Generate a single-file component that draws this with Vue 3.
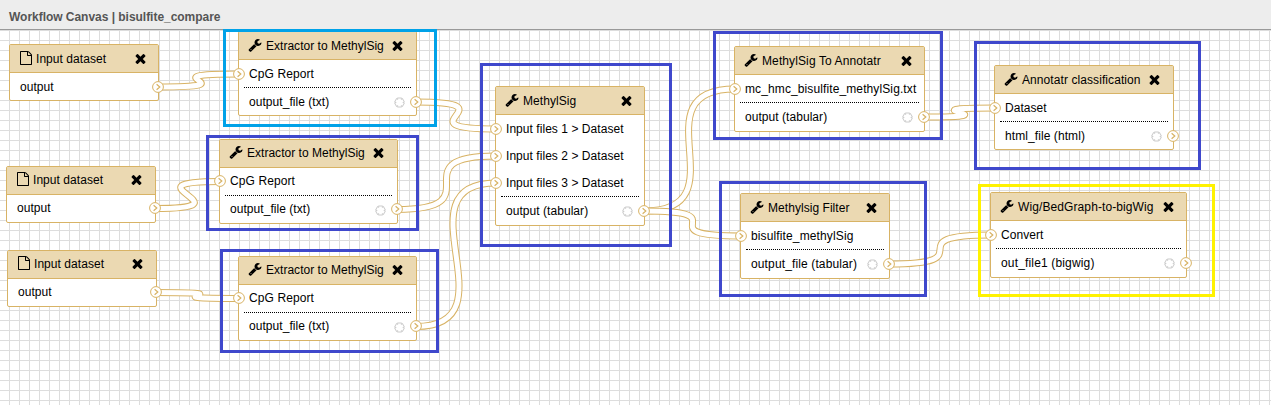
<script setup>
const WRENCH = 'M448 1472q0-26-19-45t-45-19-45 19-19 45 19 45 45 19 45-19 19-45zm644-420l-682 682q-37 37-90 37-52 0-91-37l-106-108q-38-36-38-90 0-53 38-91l681-681q39 98 114.5 173.5t173.5 114.5zm634-435q0 39-23 106-47 134-164.5 217.5t-258.5 83.5q-185 0-316.5-131.5t-131.5-316.5 131.5-316.5 316.5-131.5q58 0 121.5 16.5t107.5 46.5q16 11 16 28t-16 28l-293 169v224l193 107q5-3 79-48.5t135.5-81 70.5-35.5q15 0 23.5 10t8.5 25z'
const FILE = 'M1596 380q28 28 48 76t20 88v1152q0 40-28 68t-68 28h-1344q-40 0-68-28t-28-68v-1600q0-40 28-68t68-28h896q40 0 88 20t76 48zm-444-244v376h376q-10-29-22-41l-313-313q-12-12-41-22zm384 1528v-1024h-416q-40 0-68-28t-28-68v-416h-768v1536h1280z'
const TIMES = 'M1490 1322q0 40-28 68l-136 136q-28 28-68 28t-68-28l-294-294-294 294q-28 28-68 28t-68-28l-136-136q-28-28-28-68t28-68l294-294-294-294q-28-28-28-68t28-68l136-136q28-28 68-28t68 28l294 294 294-294q28-28 68-28t68 28l136 136q28 28 28 68t-28 68l-294 294 294 294q28 28 28 68z'

// low: content sits one pixel lower in the box; tall: last row is one pixel taller
const nodes = [
  { x: 9, y: 44, w: 150, low: true, title: 'Input dataset', inputs: [], output: 'output' },
  { x: 6, y: 166, w: 150, shift: true, title: 'Input dataset', inputs: [], output: 'output' },
  { x: 7, y: 250, w: 150, shift: true, title: 'Input dataset', inputs: [], output: 'output' },
  { x: 238, y: 31, w: 179, low: true, shift: true, title: 'Extractor to MethylSig', inputs: ['CpG Report'], output: 'output_file (txt)' },
  { x: 219, y: 139, w: 179, shift: true, title: 'Extractor to MethylSig', inputs: ['CpG Report'], output: 'output_file (txt)' },
  { x: 238, y: 256, w: 179, shift: true, title: 'Extractor to MethylSig', inputs: ['CpG Report'], output: 'output_file (txt)' },
  { x: 495, y: 86, w: 150, low: true, tall: true, title: 'MethylSig', inputs: ['Input files 1 > Dataset', 'Input files 2 > Dataset', 'Input files 3 > Dataset'], output: 'output (tabular)' },
  { x: 734, y: 46, w: 191, low: true, tall: true, title: 'MethylSig To Annotatr', inputs: ['mc_hmc_bisulfite_methylSig.txt'], output: 'output (tabular)' },
  { x: 740, y: 193, w: 150, low: true, tall: true, title: 'Methylsig Filter', inputs: ['bisulfite_methylSig'], output: 'output_file (tabular)' },
  { x: 994, y: 65, w: 180, low: true, shift: true, title: 'Annotatr classification', inputs: ['Dataset'], output: 'html_file (html)' },
  { x: 990, y: 192, w: 197, low: true, tall: true, title: 'Wig/BedGraph-to-bigWig', inputs: ['Convert'], output: 'out_file1 (bigwig)' },
]

const tracking = {
  'Extractor to MethylSig': 0.02,
  'CpG Report': 0.1,
  'mc_hmc_bisulfite_methylSig.txt': 0.11,
  'MethylSig To Annotatr': 0.11,
  'Annotatr classification': 0.08,
  'Wig/BedGraph-to-bigWig': 0.1,
  'bisulfite_methylSig': 0.13,
  'output_file (tabular)': 0.13,
  'out_file1 (bigwig)': 0.16,
  'html_file (html)': 0.08,
}
const spacing = (label) => ({ letterSpacing: (tracking[label] ?? 0.05) + 'px' })

// [source node, target node, target input index]
const links = [
  [0, 3, 0], [1, 4, 0], [2, 5, 0],
  [3, 6, 0], [4, 6, 1], [5, 6, 2],
  [6, 7, 0], [6, 8, 0], [7, 9, 0], [8, 10, 0],
]

const curves = links.map(([from, to, slot]) => {
  const a = nodes[from]
  const b = nodes[to]
  const n = a.inputs.length
  const x1 = a.x + a.w - 1
  const y1 = a.y + (n ? 43.5 + n * 27 : 42.5) + (a.low ? 0.5 : 0)
  const x2 = b.x + 1
  const y2 = b.y + 42.5 + slot * 27 + (b.low ? 0.5 : 0)
  const shift = Math.min(Math.max(Math.abs(y2 - y1) / 2, 100), 300)
  return `M${x1} ${y1}C${x1 + shift} ${y1} ${x2 - shift} ${y2} ${x2} ${y2}`
})

const frames = [
  { x: 223, y: 29, w: 214, h: 98, tone: 'cyan' },
  { x: 206, y: 135, w: 213, h: 96, tone: 'blue' },
  { x: 220, y: 249, w: 219, h: 104, tone: 'blue' },
  { x: 480, y: 63, w: 192, h: 184, tone: 'blue' },
  { x: 713, y: 31, w: 230, h: 109, tone: 'blue' },
  { x: 974, y: 41, w: 227, h: 129, tone: 'blue' },
  { x: 719, y: 181, w: 208, h: 116, tone: 'blue' },
  { x: 978, y: 184, w: 237, h: 113, tone: 'yellow' },
]
</script>

<template>
  <div class="editor">
    <header class="titlebar">Workflow Canvas | bisulfite_compare</header>
    <svg class="links" width="1271" height="405">
      <g v-for="(d, i) in curves" :key="i">
        <path :d="d" class="outer" />
        <path :d="d" class="inner" />
      </g>
    </svg>

    <section
      v-for="(n, i) in nodes"
      :key="'n' + i"
      class="node"
      :class="{ low: n.low, tall: n.tall, shift: n.shift }"
      :style="{ left: n.x + 'px', top: n.y + 'px', width: n.w + 'px' }"
    >
      <div class="head">
        <svg class="kind" viewBox="0 0 1792 1792"><path :d="n.inputs.length ? WRENCH : FILE" /></svg>
        <span class="name" :class="{ tool: n.inputs.length }" :style="spacing(n.title)">{{ n.title }}</span>
        <svg class="close" viewBox="0 0 1792 1792"><path :d="TIMES" /></svg>
      </div>
      <div v-for="label in n.inputs" :key="label" class="row">
        <svg class="port in" viewBox="0 0 12 12"><circle cx="6" cy="6" r="5.4" /><path d="M4.6 3.2L7.8 6L4.6 8.8" /></svg>
        <span :style="spacing(label)">{{ label }}</span>
      </div>
      <div v-if="n.inputs.length" class="rule"></div>
      <div class="row last">
        <span :style="spacing(n.output)">{{ n.output }}</span>
        <svg v-if="n.inputs.length" class="mark" viewBox="0 0 11 11">
          <path class="halo" d="M5.5 .4V10.6M1.2 3L9.8 8M9.8 3L1.2 8" />
          <path class="star" d="M5.5 1.4V9.6M2 3.5L9 7.5M9 3.5L2 7.5" />
        </svg>
        <svg class="port out" viewBox="0 0 12 12"><circle cx="6" cy="6" r="5.4" /><path d="M4.6 3.2L7.8 6L4.6 8.8" /></svg>
      </div>
    </section>

    <div
      v-for="(f, i) in frames"
      :key="'f' + i"
      class="frame"
      :class="f.tone"
      :style="{ left: f.x + 'px', top: f.y + 'px', width: f.w + 'px', height: f.h + 'px' }"
    ></div>
  </div>
</template>

<style>
body {
  margin: 0;
  overflow: hidden;
}
</style>

<style scoped>
.editor {
  position: relative;
  width: 1271px;
  height: 405px;
  overflow: hidden;
  box-sizing: border-box;
  background-color: #fff;
  background-image:
    linear-gradient(to right, #ddd 1px, transparent 1px),
    linear-gradient(to bottom, #ddd 1px, transparent 1px);
  background-size: 10px 10px;
  background-position: 9px 0;
  font: 12px/27px "Liberation Sans", Arial, sans-serif;
  color: #000;
}
.titlebar {
  box-sizing: border-box;
  height: 30px;
  padding: 4px 9px 0;
  border-bottom: 1px solid #999;
  background: #ededed;
  color: #555;
  font-weight: bold;
  line-height: 26px;
  letter-spacing: -0.03px;
}
.links {
  position: absolute;
  left: 0;
  top: 0;
}
.links path {
  fill: none;
}
.outer {
  stroke: #d8b365;
  stroke-width: 7;
}
.inner {
  stroke: #fff;
  stroke-width: 5;
}
.node {
  position: absolute;
  box-sizing: border-box;
  border: 1px solid #d8b365;
  border-radius: 2px;
  background: #fff;
  white-space: nowrap;
}
.head {
  display: flex;
  height: 27px;
  padding: 0 10px 0 9px;
  border-bottom: 1px solid #d8b365;
  background: #ebd9b2;
}
.kind {
  width: 14px;
  height: 14px;
  margin-top: 6px;
  flex: none;
}
.node:not(.low) .kind,
.node:not(.low) .close {
  margin-top: 5px;
}
.name {
  margin-left: 3px;
  flex: 1;
}
.name.tool {
  margin-left: 4px;
}
.close {
  width: 15px;
  height: 15px;
  margin-top: 6px;
  flex: none;
}
.shift .head {
  padding-right: 11px;
}
.low {
  line-height: 29px;
}
.row {
  position: relative;
  height: 27px;
  padding-left: 10px;
}
.tall .last {
  height: 28px;
}
.rule {
  margin: 0 5px;
  border-top: 1px dotted #000;
}
.port {
  position: absolute;
  top: 7px;
  width: 12px;
  height: 12px;
}
.low .port {
  top: 7.5px;
}
.port circle {
  fill: #fff;
  stroke: #d8b365;
}
.port path {
  fill: none;
  stroke: #d8b365;
  stroke-width: 1.2;
}
.in {
  left: -6px;
}
.out {
  right: -6px;
}
.mark {
  position: absolute;
  top: 9px;
  right: 11px;
  width: 11px;
  height: 11px;
}
.halo {
  stroke: #ccc;
  stroke-width: 4.4;
}
.star {
  stroke: #fff;
  stroke-width: 2.8;
}
.frame {
  position: absolute;
  box-sizing: border-box;
  border: 3px solid;
}
.blue {
  border-color: #3f48cc;
}
.cyan {
  border-color: #00a2e8;
}
.yellow {
  border-color: #fff200;
}
</style>
